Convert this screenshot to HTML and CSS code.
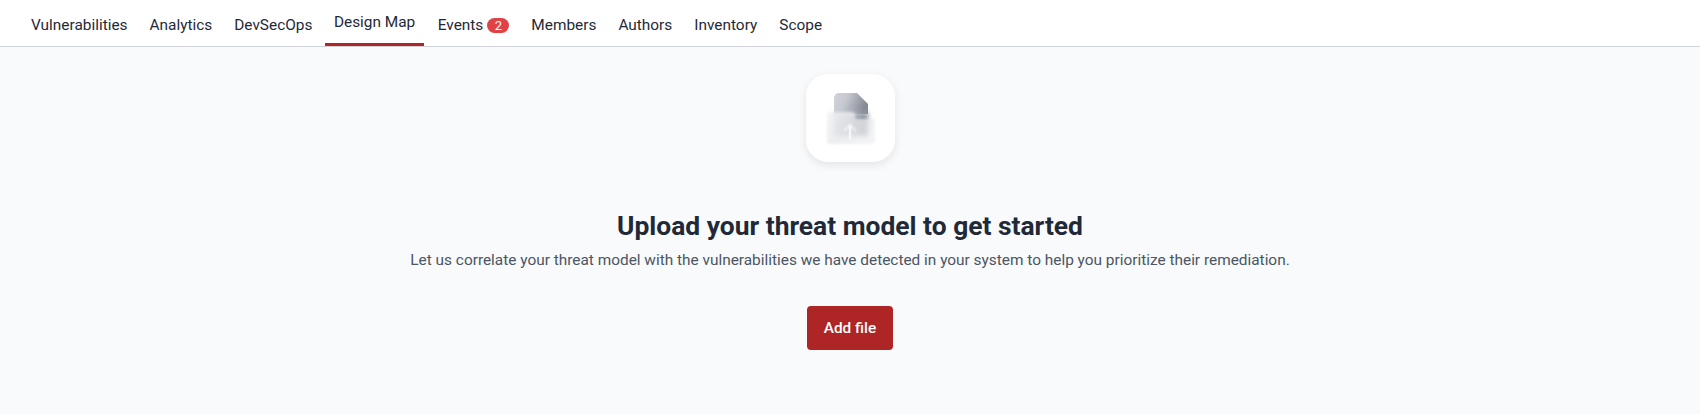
FILE: index.html
```html
<!DOCTYPE html>
<html lang="en">
<head>
<meta charset="utf-8">
<title>Design Map</title>
<link rel="stylesheet" href="styles.css">
</head>
<body>
<nav class="tabs">
  <a class="tab">Vulnerabilities</a>
  <a class="tab">Analytics</a>
  <a class="tab">DevSecOps</a>
  <a class="tab active">Design Map</a>
  <a class="tab">Events <span class="badge">2</span></a>
  <a class="tab">Members</a>
  <a class="tab">Authors</a>
  <a class="tab">Inventory</a>
  <a class="tab">Scope</a>
</nav>
<main class="empty">
  <div class="icon-box">
    <svg width="89" height="89" viewBox="0 0 89 89" aria-hidden="true">
      <defs>
        <linearGradient id="doc" x1="0" y1="0" x2="1" y2="0.25">
          <stop offset="0" stop-color="#d0d3d9"/>
          <stop offset="0.4" stop-color="#c6c9d0"/>
          <stop offset="1" stop-color="#868a95"/>
        </linearGradient>
        <linearGradient id="folder" x1="0" y1="0" x2="1" y2="0.6">
          <stop offset="0" stop-color="#eff0f3"/>
          <stop offset="0.55" stop-color="#e6e7eb"/>
          <stop offset="1" stop-color="#eff0f3"/>
        </linearGradient>
        <filter id="soft" x="-10%" y="-10%" width="120%" height="120%">
          <feGaussianBlur stdDeviation="0.8"/>
        </filter>
        <filter id="softer" x="-20%" y="-20%" width="140%" height="140%">
          <feGaussianBlur stdDeviation="2.4"/>
        </filter>
      </defs>
      <path d="M28 24a5 5 0 0 1 5-5h18l11 11v10H28z" fill="url(#doc)"/>
      <path d="M28 38h34v24H28z" fill="url(#doc)" filter="url(#softer)"/>
      <path d="M21 41a3 3 0 0 1 3-3h22a3 3 0 0 1 3 3v2a2 2 0 0 0 2 2h15a3 3 0 0 1 3 3v19a3 3 0 0 1-3 3H24a3 3 0 0 1-3-3z" fill="url(#folder)" fill-opacity=".74" filter="url(#soft)"/>
      <path d="M44 65V50M38 57l6-6 6 6" fill="none" stroke="#fff" stroke-width="1.2" filter="url(#soft)"/>
      <path d="M44 65V52" fill="none" stroke="#fff" stroke-width="1"/>
    </svg>
  </div>
  <h1 class="title">Upload your threat model to get started</h1>
  <p class="desc">Let us correlate your threat model with the vulnerabilities we have detected in your system to help you prioritize their remediation.</p>
  <button class="add" type="button">Add file</button>
</main>
</body>
</html>
```
FILE: styles.css
```css
* { box-sizing: border-box; }
html, body { margin: 0; height: 100%; }
body {
  background: #f9fafb;
  font-family: Roboto, "Liberation Sans", sans-serif;
  color: #1f2937;
  display: flex;
  flex-direction: column;
}
.tabs {
  display: flex;
  height: 47px;
  padding-left: 22px;
  background: #fff;
  border-bottom: 1px solid #d1d5db;
}
.tab {
  display: flex;
  align-items: center;
  gap: 4px;
  height: 46px;
  padding: 4px 9px 0;
  margin-right: 4px;
  font-size: 15.4px;
  line-height: 20px;
  color: #1f2937;
  white-space: nowrap;
}
.tab.active {
  padding: 0 8.5px;
  margin-right: 5px;
  border-bottom: 3px solid #b02525;
}
.badge {
  display: inline-flex;
  align-items: center;
  justify-content: center;
  width: 22px;
  height: 15px;
  border-radius: 8px;
  background: #e04245;
  color: #fff;
  font-size: 13px;
  line-height: 15px;
}
.empty {
  flex: 1;
  display: flex;
  flex-direction: column;
  align-items: center;
  padding-top: 27px;
}
.icon-box {
  width: 89px;
  height: 88px;
  display: flex;
  align-items: center;
  justify-content: center;
  border-radius: 22px;
  background: #fff;
  box-shadow: 0 3px 8px rgba(31, 41, 55, .1);
}
.title {
  margin: 48px 0 0;
  font-size: 26.4px;
  line-height: 32px;
  font-weight: 700;
  color: #1f2937;
}
.desc {
  margin: 8px 0 0;
  font-size: 15.4px;
  line-height: 20px;
  color: #4b5563;
}
.add {
  margin-top: 36px;
  width: 86px;
  height: 44px;
  border: 0;
  border-radius: 4px;
  background: #ad2525;
  color: #fff;
  font: 500 15.4px/20px Roboto, "Liberation Sans", sans-serif;
}
```
